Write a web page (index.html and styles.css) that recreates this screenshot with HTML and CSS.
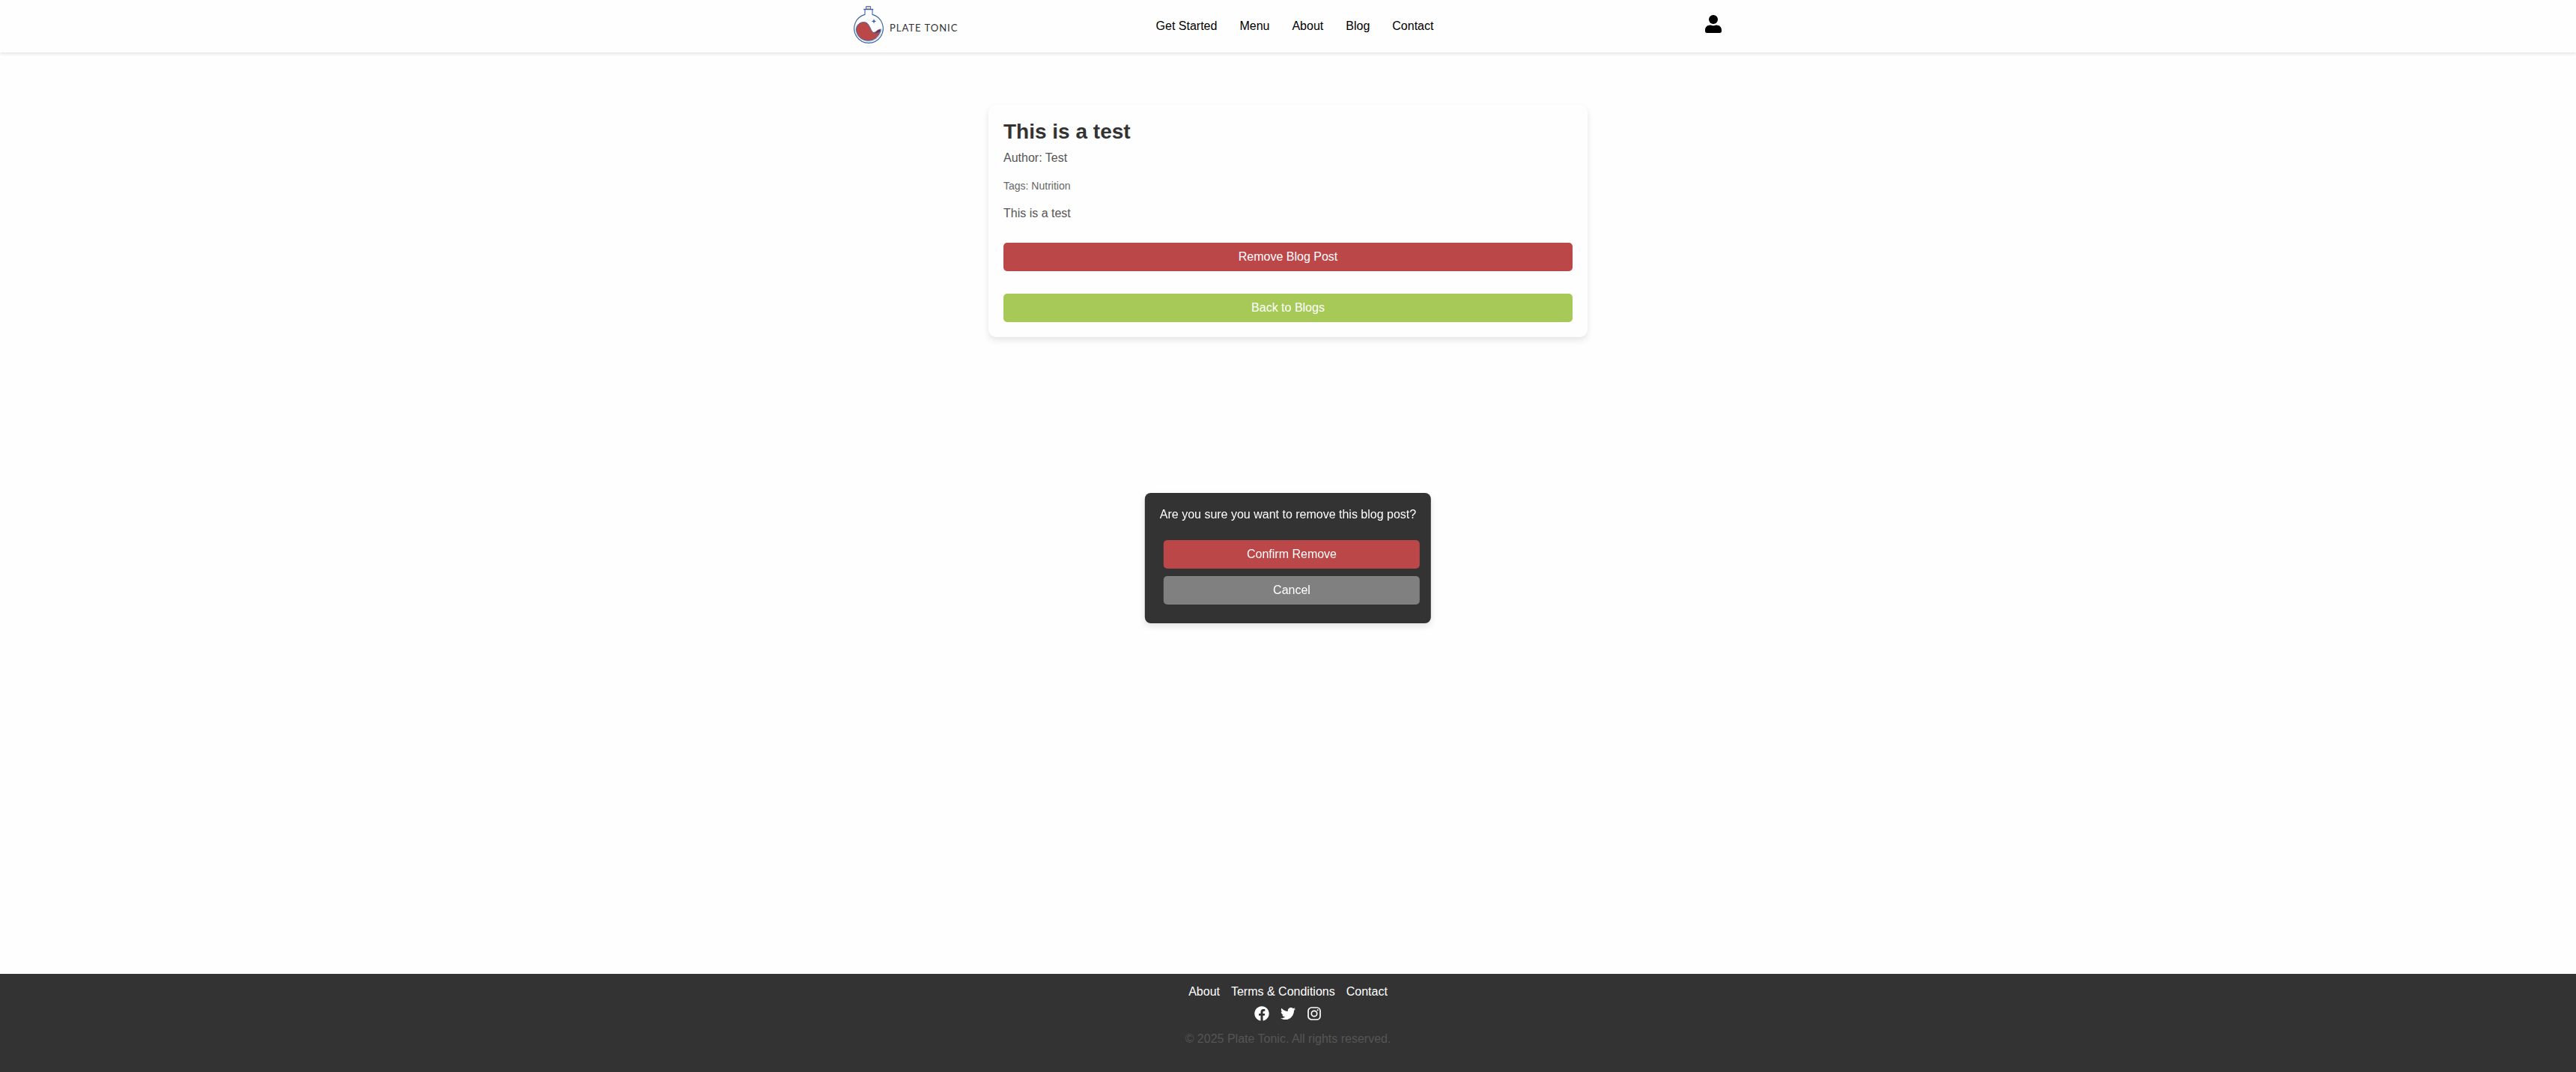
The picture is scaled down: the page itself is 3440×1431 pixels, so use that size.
FILE: index.html
```html
<!DOCTYPE html>
<html lang="en">
<head>
  <meta charset="utf-8">
  <meta name="viewport" content="width=device-width, initial-scale=1">
  <title>Plate Tonic</title>
  <link rel="stylesheet" href="styles.css">
</head>
<body>
  <header class="site-header">
    <div class="header-inner">
      <a class="logo" href="#">
        <svg class="logo-mark" viewBox="0 0 40 50" aria-hidden="true">
          <path d="M16.600 4.500V.5h6v4" fill="#e3d3c6" stroke="#3a62a5" stroke-width=".9"/>
          <path d="M13.200 4.500h13" fill="none" stroke="#3a62a5" stroke-width="1.400"/>
          <path d="M15 4.500v6.900A19.300 19.300 0 1 0 25 11.400V4.500" fill="none" stroke="#3a62a5" stroke-width="1.100"/>
          <path d="M2.800 30a17.200 17.200 0 0 0 34.400 0" fill="none" stroke="#8fa8d0" stroke-width=".6"/>
          <path d="M26 35.500c4 0 5.500-4.500 10-4.600.2 2-.3 3.500-1 4.600-3 2-6 1.500-9 0z" fill="#7d2b3d" stroke="#3a62a5" stroke-width=".6"/>
          <path d="M3.400 30.500c.6-5.500 5-9 10-9 8.500 0 8 11.500 13.500 14.300 3 1 6-.3 8.300-1.600-1.700 7-8 12-15.700 12-9 0-16-6.500-16.100-15.700z" fill="#bc4749" stroke="#3a62a5" stroke-width=".9"/>
          <path d="M27 17.200l.9 2.300 2.400.9-2.400.9-.9 2.300-.9-2.300-2.400-.9 2.400-.9z" fill="#3a62a5"/>
        </svg>
        <span class="logo-text">PLATE TONIC</span>
      </a>
      <nav class="main-nav" aria-label="Main">
        <a href="#">Get Started</a>
        <a href="#">Menu</a>
        <a href="#">About</a>
        <a href="#">Blog</a>
        <a href="#">Contact</a>
      </nav>
      <div class="account">
        <a class="account-link" href="#" aria-label="Account">
          <svg class="account-icon" viewBox="0 0 22 24" aria-hidden="true">
            <circle cx="11" cy="6" r="6"/>
            <path d="M6.500 13.500h1c2.200 1 4.800 1 7 0h1c3.600 0 6.500 2.900 6.500 6.500v1.800c0 1.200-1 2.200-2.200 2.200H2.200C1 24 0 23 0 21.800V20c0-3.600 2.900-6.500 6.500-6.500z"/>
          </svg>
        </a>
      </div>
    </div>
  </header>

  <main class="content">
    <article class="post-card">
      <h1 class="post-title">This is a test</h1>
      <p class="post-author">Author: Test</p>
      <p class="post-tags">Tags: Nutrition</p>
      <p class="post-body">This is a test</p>
      <div class="post-actions">
        <button class="btn btn-danger" type="button">Remove Blog Post</button>
        <button class="btn btn-primary" type="button">Back to Blogs</button>
      </div>
    </article>
  </main>

  <div class="confirm" role="dialog" aria-labelledby="confirm-text">
    <p class="confirm-text" id="confirm-text">Are you sure you want to remove this blog post?</p>
    <div class="confirm-actions">
      <button class="btn btn-danger" type="button">Confirm Remove</button>
      <button class="btn btn-muted" type="button">Cancel</button>
    </div>
  </div>

  <footer class="site-footer">
    <nav class="footer-links" aria-label="Footer">
      <a href="#">About</a>
      <a href="#">Terms &amp; Conditions</a>
      <a href="#">Contact</a>
    </nav>
    <div class="social">
      <a href="#" aria-label="Facebook">
        <svg viewBox="0 0 512 512" aria-hidden="true"><path d="M504 256C504 119 393 8 256 8S8 119 8 256c0 123.780 90.690 226.380 209.250 245V327.690h-63V256h63v-54.640c0-62.150 37-96.480 93.670-96.480 27.140 0 55.520 4.840 55.520 4.840v61h-31.280c-30.800 0-40.410 19.120-40.410 38.730V256h68.780l-11 71.690h-57.780V501C413.310 482.380 504 379.780 504 256z"/></svg>
      </a>
      <a href="#" aria-label="Twitter">
        <svg viewBox="0 0 512 512" aria-hidden="true"><path d="M459.370 151.716c.325 4.548.325 9.097.325 13.645 0 138.720-105.583 298.558-298.558 298.558-59.452 0-114.680-17.219-161.137-47.106 8.447.974 16.568 1.299 25.340 1.299 49.055 0 94.213-16.568 130.274-44.832-46.132-.975-84.792-31.188-98.112-72.772 6.498.974 12.995 1.624 19.818 1.624 9.421 0 18.843-1.300 27.614-3.573-48.081-9.747-84.143-51.980-84.143-102.985v-1.299c13.969 7.797 30.214 12.670 47.431 13.319-28.264-18.843-46.781-51.005-46.781-87.391 0-19.492 5.197-37.360 14.294-52.954 51.655 63.675 129.300 105.258 216.365 109.807-1.624-7.797-2.599-15.918-2.599-24.040 0-57.828 46.782-104.934 104.934-104.934 30.213 0 57.502 12.670 76.670 33.137 23.715-4.548 46.456-13.320 66.599-25.340-7.798 24.366-24.366 44.833-46.132 57.827 21.117-2.273 41.584-8.122 60.426-16.243-14.292 20.791-32.161 39.308-52.628 54.253z"/></svg>
      </a>
      <a href="#" aria-label="Instagram">
        <svg viewBox="0 0 20 20" aria-hidden="true">
          <rect x="2" y="2" width="16" height="16" rx="4.500" fill="none" stroke="currentColor" stroke-width="1.700"/>
          <circle cx="10" cy="10" r="3.700" fill="none" stroke="currentColor" stroke-width="1.700"/>
          <circle cx="14.700" cy="5.300" r="1.100"/>
        </svg>
      </a>
    </div>
    <p class="copyright">© 2025 Plate Tonic. All rights reserved.</p>
  </footer>
</body>
</html>
```
FILE: styles.css
```css
* {
  box-sizing: border-box;
}

html {
  height: 100%;
}

body {
  display: flex;
  flex-direction: column;
  min-height: 100%;
  margin: 0;
  background: #fefefe;
  color: #333;
  font: 16px/18px "Liberation Sans", Arial, sans-serif;
}

h1,
p {
  margin: 0;
}

a {
  color: inherit;
  text-decoration: none;
}

svg {
  display: block;
  fill: currentColor;
}

/* Header */
.site-header {
  background: #fefefe;
  box-shadow: 0 2px 4px rgba(0, 0, 0, 0.1);
}

.header-inner {
  display: flex;
  align-items: center;
  justify-content: space-between;
  max-width: 1200px;
  height: 70px;
  margin: 0 auto;
  padding: 0 20px;
}

.logo {
  display: flex;
  align-items: center;
  gap: 8px;
  width: 146px;
  padding-bottom: 4px;
}

.logo-mark {
  flex: none;
  width: 40px;
  height: 50px;
}

.logo-text {
  padding-top: 8px;
  font-family: Lato, sans-serif;
  font-size: 13px;
  letter-spacing: 1px;
  white-space: nowrap;
}

.main-nav {
  display: flex;
  gap: 30px;
  color: #000;
}

.account {
  display: flex;
  justify-content: flex-end;
  width: 128px;
  padding: 0 1px 6px 0;
  color: #000;
}

.account-icon {
  width: 22px;
  height: 24px;
}

/* Blog post */
.content {
  flex: 1;
  padding: 70px 20px;
}

.post-card {
  max-width: 800px;
  margin: 0 auto;
  padding: 20px;
  border-radius: 10px;
  background: #fefefe;
  box-shadow: 0 4px 8px rgba(0, 0, 0, 0.1);
}

.post-title {
  margin-bottom: 10px;
  font-size: 28px;
  line-height: 32px;
}

.post-author,
.post-body {
  color: #555;
}

.post-author {
  margin-bottom: 20px;
}

.post-tags {
  margin-bottom: 20px;
  color: #666;
  font-size: 14px;
  line-height: 16px;
}

.post-actions {
  display: grid;
  gap: 30px;
  margin-top: 30px;
}

.btn {
  width: 100%;
  padding: 10px;
  border: 0;
  border-radius: 5px;
  color: #fff;
  font: inherit;
  cursor: pointer;
}

.btn-danger {
  background: #bc4749;
}

.btn-primary {
  background: #a7c957;
}

.btn-muted {
  background: #808080;
}

/* Confirmation dialog */
.confirm {
  position: fixed;
  top: 46vh;
  left: 50%;
  transform: translateX(-50%);
  padding: 20px;
  border-radius: 8px;
  background: #333;
  box-shadow: 0 4px 8px rgba(0, 0, 0, 0.1);
  color: #fff;
  text-align: center;
  white-space: nowrap;
}

.confirm-actions {
  display: grid;
  gap: 10px;
  margin: 25px -5px 5px 5px;
}

/* Footer */
.site-footer {
  display: flex;
  flex-direction: column;
  align-items: center;
  gap: 10px;
  padding: 15px 20px 35px;
  background: #333;
  color: #fff;
}

.footer-links,
.social {
  display: flex;
  gap: 15px;
}

.social svg {
  width: 20px;
  height: 20px;
}

.copyright {
  padding-top: 5px;
  color: #555;
}
```
